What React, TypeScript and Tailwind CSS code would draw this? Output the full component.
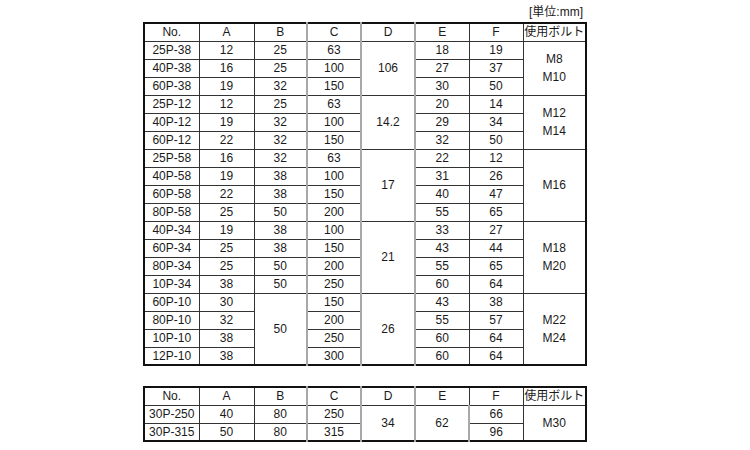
import React from "react"

type Row = { no: string; a: string; b?: string; c: string; e: string; f: string }

const rows: Row[] = [
  { no: "25P-38", a: "12", b: "25", c: "63", e: "18", f: "19" },
  { no: "40P-38", a: "16", b: "25", c: "100", e: "27", f: "37" },
  { no: "60P-38", a: "19", b: "32", c: "150", e: "30", f: "50" },
  { no: "25P-12", a: "12", b: "25", c: "63", e: "20", f: "14" },
  { no: "40P-12", a: "19", b: "32", c: "100", e: "29", f: "34" },
  { no: "60P-12", a: "22", b: "32", c: "150", e: "32", f: "50" },
  { no: "25P-58", a: "16", b: "32", c: "63", e: "22", f: "12" },
  { no: "40P-58", a: "19", b: "38", c: "100", e: "31", f: "26" },
  { no: "60P-58", a: "22", b: "38", c: "150", e: "40", f: "47" },
  { no: "80P-58", a: "25", b: "50", c: "200", e: "55", f: "65" },
  { no: "40P-34", a: "19", b: "38", c: "100", e: "33", f: "27" },
  { no: "60P-34", a: "25", b: "38", c: "150", e: "43", f: "44" },
  { no: "80P-34", a: "25", b: "50", c: "200", e: "55", f: "65" },
  { no: "10P-34", a: "38", b: "50", c: "250", e: "60", f: "64" },
  { no: "60P-10", a: "30", c: "150", e: "43", f: "38" },
  { no: "80P-10", a: "32", c: "200", e: "55", f: "57" },
  { no: "10P-10", a: "38", c: "250", e: "60", f: "64" },
  { no: "12P-10", a: "38", c: "300", e: "60", f: "64" },
]

// merged groups: start row -> [span, D, bolt lines]
const groups: Record<number, { span: number; d: string; bolt: string[] }> = {
  0: { span: 3, d: "106", bolt: ["M8", "M10"] },
  3: { span: 3, d: "14.2", bolt: ["M12", "M14"] },
  6: { span: 4, d: "17", bolt: ["M16"] },
  10: { span: 4, d: "21", bolt: ["M18", "M20"] },
  14: { span: 4, d: "26", bolt: ["M22", "M24"] },
}

const cell = "h-[18px] p-0 text-center align-middle border border-[#333] leading-none"
const gray = "border-l-2 border-l-[#a8a8a8]"

function Header() {
  return (
    <tr>
      <th className={`${cell} font-normal`}>No.</th>
      <th className={`${cell} font-normal`}>A</th>
      <th className={`${cell} font-normal`}>B</th>
      <th className={`${cell} ${gray} font-normal`}>C</th>
      <th className={`${cell} ${gray} font-normal`}>D</th>
      <th className={`${cell} ${gray} font-normal`}>E</th>
      <th className={`${cell} font-normal`}>F</th>
      <th className={`${cell} font-normal`}>使用ボルト</th>
    </tr>
  )
}

function Cols() {
  return (
    <colgroup>
      <col className="w-[55px]" />
      <col className="w-[55px]" />
      <col className="w-[53px]" />
      <col className="w-[54px]" />
      <col className="w-[54px]" />
      <col className="w-[54px]" />
      <col className="w-[54px]" />
      <col className="w-[63px]" />
    </colgroup>
  )
}

export default function App() {
  return (
    <div
      className="w-[750px] h-[450px] bg-white text-[#1a1a1a] text-[12px] pl-[143px] pt-[5px]"
      style={{ fontFamily: '"Liberation Sans", "Noto Sans CJK JP", sans-serif' }}
    >
      <div className="w-[442px] text-right text-[12px] h-[17px] leading-[15px] pr-[2px]">
        [単位:mm]
      </div>

      <table className="table-fixed border-collapse border-2 border-[#111] w-[442px]">
        <Cols />
        <tbody>
          <Header />
          {rows.map((r, i) => {
            const g = groups[i]
            return (
              <tr key={r.no}>
                <td className={cell}>{r.no}</td>
                <td className={cell}>{r.a}</td>
                {i < 14 ? (
                  <td className={cell}>{r.b}</td>
                ) : i === 14 ? (
                  <td className={cell} rowSpan={4}>50</td>
                ) : null}
                <td className={`${cell} ${gray}`}>{r.c}</td>
                {g && (
                  <td className={`${cell} ${gray}`} rowSpan={g.span}>
                    {g.d}
                  </td>
                )}
                <td className={`${cell} ${gray}`}>{r.e}</td>
                <td className={cell}>{r.f}</td>
                {g && (
                  <td className={cell} rowSpan={g.span}>
                    {g.bolt.map((b) => (
                      <div key={b} className="leading-[18px]">{b}</div>
                    ))}
                  </td>
                )}
              </tr>
            )
          })}
        </tbody>
      </table>

      <table className="table-fixed border-collapse border-2 border-[#111] w-[443px] mt-[20px]">
        <Cols />
        <tbody>
          <Header />
          <tr>
            <td className={cell}>30P-250</td>
            <td className={cell}>40</td>
            <td className={cell}>80</td>
            <td className={`${cell} ${gray}`}>250</td>
            <td className={`${cell} ${gray}`} rowSpan={2}>34</td>
            <td className={`${cell} ${gray}`} rowSpan={2}>62</td>
            <td className={`${cell} ${gray}`}>66</td>
            <td className={cell} rowSpan={2}>M30</td>
          </tr>
          <tr>
            <td className={cell}>30P-315</td>
            <td className={cell}>50</td>
            <td className={cell}>80</td>
            <td className={`${cell} ${gray}`}>315</td>
            <td className={`${cell} ${gray}`}>96</td>
          </tr>
        </tbody>
      </table>
    </div>
  )
}
